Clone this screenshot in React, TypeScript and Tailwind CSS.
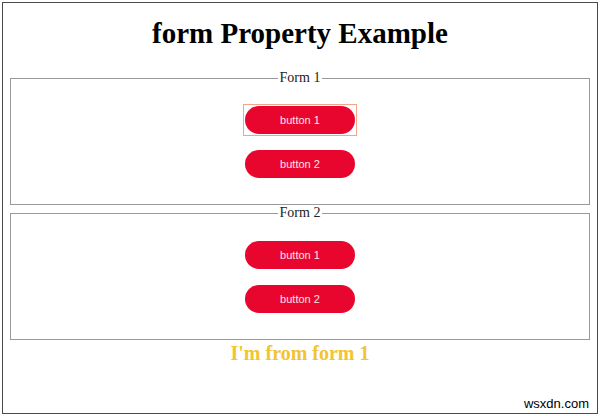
const serif = { fontFamily: '"Liberation Serif", "Times New Roman", serif' };

function FormBox({ label, focused }: { label: string; focused?: boolean }) {
  return (
    <fieldset className="mx-[7px] border border-[#9a9a9a] pb-[26px] pt-[20px] text-center">
      <legend className="mx-auto px-[2px] text-[14px] leading-[16px] text-[#222]">{label}</legend>
      <div className="flex flex-col items-center gap-[16px]">
        <div className={focused ? 'outline outline-1 outline-[#f0a58c] outline-offset-[1px]' : ''}>
          <button
            type="button"
            className="h-[28px] w-[110px] rounded-full bg-[#e8062e] text-[11px] text-[#fbe3e7] font-['Liberation_Sans',Arial,sans-serif]"
          >
            button 1
          </button>
        </div>
        <button
          type="button"
          className="h-[28px] w-[110px] rounded-full bg-[#e8062e] text-[11px] text-[#fbe3e7] font-['Liberation_Sans',Arial,sans-serif]"
        >
          button 2
        </button>
      </div>
    </fieldset>
  );
}

export default function App() {
  return (
    <div className="h-[416px] w-[600px] bg-white p-[2px]" style={serif}>
      <div className="flex h-[412px] flex-col border border-[#4a4a4a]">
        <h1 className="mt-[14px] mb-[21px] text-center text-[29px] font-bold leading-[32px] text-black">
          form Property Example
        </h1>
        <FormBox label="Form 1" focused />
        <FormBox label="Form 2" />
        <p className="mt-[2px] text-center text-[20px] font-bold leading-[22px] text-[#f2c430]">I'm from form 1</p>
        <div className="mt-auto flex justify-end pr-[8px] pb-[2px]">
          <span className="text-[13px] leading-[15px] text-black font-['Liberation_Sans',Arial,sans-serif]">wsxdn.com</span>
        </div>
      </div>
    </div>
  );
}
